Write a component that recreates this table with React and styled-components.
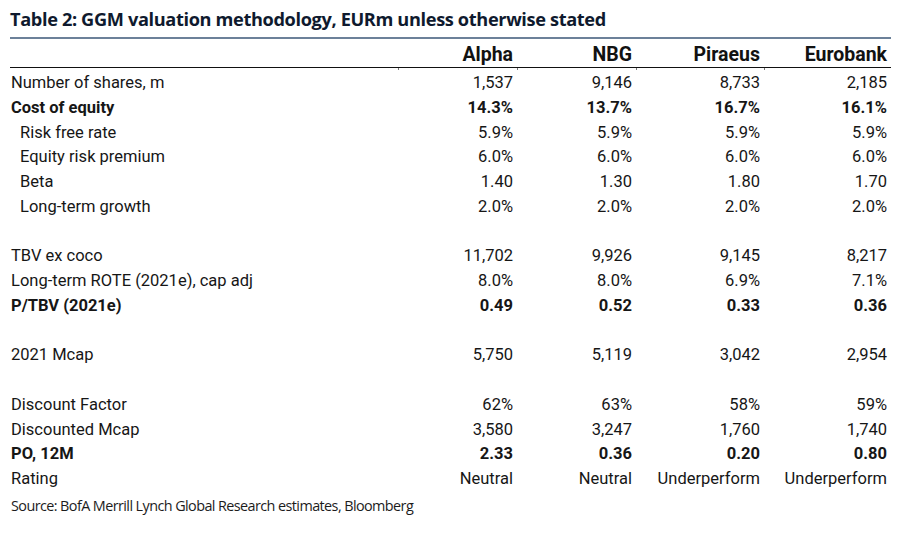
import React from 'react'
import styled, { createGlobalStyle } from 'styled-components'

const GlobalStyle = createGlobalStyle`
  html, body {
    margin: 0;
    padding: 0;
    background: #ffffff;
  }
`

const BODY_FONT = `Roboto, "Liberation Sans", sans-serif`
const TITLE_FONT = `"Open Sans", "Noto Sans", sans-serif`
const COLS = '388px 119px 119px 128px 127px'

const columns = ['Alpha', 'NBG', 'Piraeus', 'Eurobank']

const rows = [
  { label: 'Number of shares, m', values: ['1,537', '9,146', '8,733', '2,185'] },
  { label: 'Cost of equity', values: ['14.3%', '13.7%', '16.7%', '16.1%'], bold: true },
  { label: 'Risk free rate', values: ['5.9%', '5.9%', '5.9%', '5.9%'], indent: true },
  { label: 'Equity risk premium', values: ['6.0%', '6.0%', '6.0%', '6.0%'], indent: true },
  { label: 'Beta', values: ['1.40', '1.30', '1.80', '1.70'], indent: true },
  { label: 'Long-term growth', values: ['2.0%', '2.0%', '2.0%', '2.0%'], indent: true },
  { spacer: true },
  { label: 'TBV ex coco', values: ['11,702', '9,926', '9,145', '8,217'] },
  { label: 'Long-term ROTE (2021e), cap adj', values: ['8.0%', '8.0%', '6.9%', '7.1%'] },
  { label: 'P/TBV (2021e)', values: ['0.49', '0.52', '0.33', '0.36'], bold: true },
  { spacer: true },
  { label: '2021 Mcap', values: ['5,750', '5,119', '3,042', '2,954'] },
  { spacer: true },
  { label: 'Discount Factor', values: ['62%', '63%', '58%', '59%'] },
  { label: 'Discounted Mcap', values: ['3,580', '3,247', '1,760', '1,740'] },
  { label: 'PO, 12M', values: ['2.33', '0.36', '0.20', '0.80'], bold: true },
  { label: 'Rating', values: ['Neutral', 'Neutral', 'Underperform', 'Underperform'] },
]

export default function App() {
  return (
    <Page>
      <GlobalStyle />
      <Title>Table 2: GGM valuation methodology, EURm unless otherwise stated</Title>
      <HeaderRow>
        <HeadCell />
        {columns.map((c) => (
          <HeadCell key={c} $tick>{c}</HeadCell>
        ))}
      </HeaderRow>
      <Body>
        {rows.map((r, i) =>
          r.spacer ? (
            <Spacer key={i} />
          ) : (
            <Row key={i} $bold={r.bold}>
              <Label $indent={r.indent}>{r.label}</Label>
              {r.values.map((v, j) => (
                <Value key={j}>{v}</Value>
              ))}
            </Row>
          )
        )}
      </Body>
      <Source>Source: BofA Merrill Lynch Global Research estimates, Bloomberg</Source>
    </Page>
  )
}

const Page = styled.div`
  width: 919px;
  height: 536px;
  box-sizing: border-box;
  padding: 4px 0 0 10px;
  background: #fff;
  color: #161616;
  font-family: ${BODY_FONT};
  overflow: hidden;
`

const Title = styled.div`
  font-family: ${TITLE_FONT};
  font-weight: 700;
  font-size: 18.2px;
  letter-spacing: -0.36px;
  line-height: 30px;
  color: #0f1a2e;
  padding-bottom: 3px;
  border-bottom: 2px solid #6c8199;
  width: 881px;
  white-space: nowrap;
`

const HeaderRow = styled.div`
  display: grid;
  grid-template-columns: ${COLS};
  width: 881px;
  border-bottom: 1px solid #111;
`

const HeadCell = styled.div`
  position: relative;
  font-weight: 700;
  font-size: 19.5px;
  font-stretch: 91%;
  line-height: 22px;
  padding: 5px 4px 1px 0;
  text-align: right;
  color: #121212;
  &::after {
    content: '';
    display: ${(p) => (p.$tick ? 'block' : 'none')};
    position: absolute;
    left: 0;
    bottom: -3px;
    width: 1px;
    height: 2px;
    background: #777;
  }
`

const Body = styled.div`
  display: flex;
  flex-direction: column;
  padding-top: 3px;
`

const Row = styled.div`
  display: grid;
  grid-template-columns: ${COLS};
  height: 24.75px;
  font-size: 16.5px;
  font-stretch: 88%;
  line-height: 24.75px;
  font-weight: ${(p) => (p.$bold ? 700 : 400)};
  white-space: nowrap;
`

const Spacer = styled.div`
  height: 24.75px;
`

const Label = styled.div`
  padding-left: ${(p) => (p.$indent ? '10px' : '1px')};
`

const Value = styled.div`
  text-align: right;
  padding-right: 4px;
`

const Source = styled.div`
  font-family: ${TITLE_FONT};
  font-size: 14.4px;
  letter-spacing: -0.58px;
  line-height: 20px;
  margin-top: 4px;
  padding-left: 1px;
  color: #1c1c1c;
`
